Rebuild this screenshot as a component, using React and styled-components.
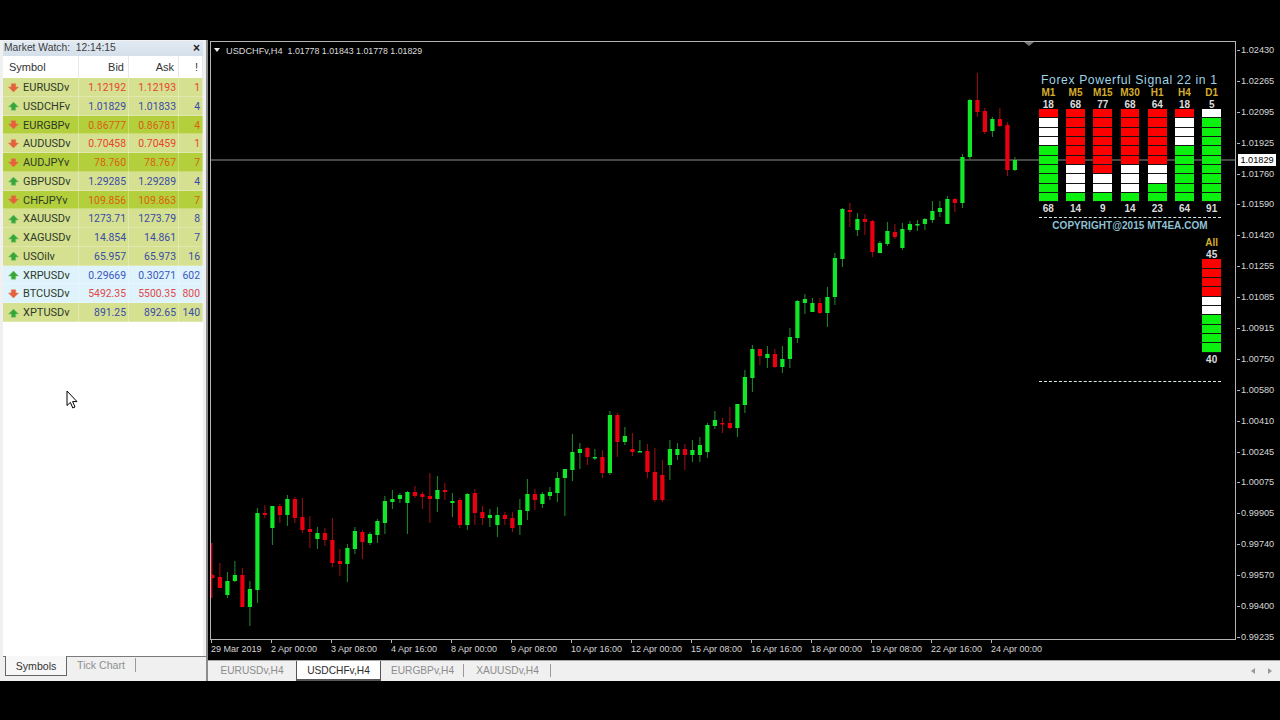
import React from 'react'
import styled, { createGlobalStyle } from 'styled-components'

const GlobalStyle = createGlobalStyle`
    html, body {
        margin: 0;
        padding: 0;
        background: #000;
        font-family: "Liberation Sans", Arial, sans-serif;
    }
`

const Page = styled.div`
    position: relative;
    width: 1280px;
    height: 720px;
    overflow: hidden;
    background: #000;
    padding-top: 40px;
    box-sizing: border-box;
`
const Terminal = styled.div`
    display: flex;
    height: 641px;
    background: #f0f0f0;
`

// left panel
const Sidebar = styled.div`
    width: 208px;
    box-sizing: border-box;
    flex-shrink: 0;
    display: flex;
    flex-direction: column;
    padding: 1px 0 5px 3px;
    border-right: 2px solid #8c8c8c;
    background: #f0f0f0;
`
const WatchPanel = styled.div`
    flex: 1;
    width: 200px;
    display: flex;
    flex-direction: column;
    background: #fff;
`
const TitleBar = styled.div`
    height: 15px;
    box-sizing: border-box;
    display: flex;
    align-items: center;
    justify-content: space-between;
    padding: 0 3px 2px 1px;
    background: linear-gradient(#e2eaf3, #d3dfea);
    color: #3c3c3c;
    font-size: 10.3px;
    white-space: pre;
`
const CloseMark = styled.span`
    font-size: 12px;
    font-weight: 700;
    color: #222;
`
const watchColumns = '76px 50px 50px 24px'
const HeaderRow = styled.div`
    display: grid;
    grid-template-columns: ${watchColumns};
    height: 22px;
    color: #333;
    font-size: 11px;
    line-height: 22px;
`
const HeaderCell = styled.div`
    text-align: ${(p) => (p.$left ? 'left' : 'right')};
    padding: ${(p) => (p.$left ? '0 0 0 6px' : '0 4px 0 0')};
    border-right: 1px solid #e8e8e8;
    border-bottom: 1px solid #e2e2e2;
`
const rowColors = {
    normal: '#d5e090',
    strong: '#b4cf3c',
    cyan: '#def3fb',
}
const Row = styled.div`
    display: grid;
    grid-template-columns: ${watchColumns};
    height: 18.75px;
    line-height: 19px;
    font-family: Roboto, "Liberation Sans", sans-serif;
    font-size: 10.4px;
    background: ${(p) => rowColors[p.$tone]};
    border-bottom: 1px solid rgba(255, 255, 255, 0.28);
    box-sizing: border-box;
`
const SymbolCell = styled.div`
    display: flex;
    align-items: center;
    gap: 4px;
    padding-left: 5px;
    color: #2f3a2a;
    border-right: 1px solid rgba(255, 255, 255, 0.3);
    font-size: 11px;
`
const PriceCell = styled.div`
    text-align: right;
    padding-right: 2px;
    color: ${(p) => p.$color};
    border-right: 1px solid rgba(255, 255, 255, 0.3);
`
const PanelTabs = styled.div`
    height: 20px;
    display: flex;
    align-items: stretch;
    border-top: 1px solid #7a7a7a;
    background: #f0f0f0;
    box-sizing: border-box;
    margin-top: -1px;
    padding-left: 2px;
    font-size: 10.6px;
`
const PanelTab = styled.div`
    display: flex;
    align-items: center;
    justify-content: center;
    width: ${(p) => p.$width}px;
    color: ${(p) => (p.$active ? '#333' : '#8f8f8f')};
    background: ${(p) => (p.$active ? '#f7f7f7' : 'transparent')};
    border-left: ${(p) => (p.$active ? '1px solid #666' : 'none')};
    border-right: 1px solid ${(p) => (p.$active ? '#666' : '#9a9a9a')};
    border-bottom: ${(p) => (p.$active ? '1px solid #666' : 'none')};
    box-sizing: border-box;
    margin-top: ${(p) => (p.$active ? '-1px' : '1px')};
    margin-bottom: ${(p) => (p.$active ? '0' : '4px')};
`

// chart side
const Workspace = styled.div`
    flex: 1;
    background: #000;
    padding-top: 1px;
    display: grid;
    grid-template-columns: 1fr 44px;
    grid-template-rows: 599px 20px 21px;
`
const ChartBox = styled.div`
    position: relative;
    margin-left: 2px;
    border: 1px solid #b4b4b4;
    background: #000;
`
const ChartSvg = styled.svg`
    display: block;
`
const ChartTitle = styled.div`
    position: absolute;
    left: 15px;
    top: 3px;
    color: #dcdcdc;
    font-size: 9.2px;
    line-height: 13px;
    white-space: pre;
`
const TitleQuotes = styled.span`
    font-size: 8.8px;
`
const TitleArrow = styled.div`
    position: absolute;
    left: 3px;
    top: 6px;
    border-left: 3.5px solid transparent;
    border-right: 3.5px solid transparent;
    border-top: 4px solid #eee;
`
const ShiftMark = styled.div`
    position: absolute;
    left: 813px;
    top: 0;
    border-left: 5px solid transparent;
    border-right: 5px solid transparent;
    border-top: 4px solid #777;
`
const PriceAxis = styled.div`
    position: relative;
    grid-column: 2;
    grid-row: 1 / 3;
    display: flex;
    flex-direction: column;
    justify-content: space-between;
    padding: 3px 0 17px 5px;
    color: #d6d6d6;
    font-size: 9.2px;
    line-height: 12px;
`
const PriceLabel = styled.div`
    position: relative;
    &::before {
        content: '';
        position: absolute;
        left: -4px;
        top: 6px;
        width: 3px;
        height: 1px;
        background: #b4b4b4;
    }
`
const LastPrice = styled.div`
    position: absolute;
    left: 2px;
    top: 113px;
    width: 38px;
    height: 12px;
    line-height: 12px;
    background: #fff;
    color: #000;
    font-size: 9.2px;
    text-align: center;
`
const TimeAxis = styled.div`
    grid-column: 1;
    grid-row: 2;
    display: flex;
    padding-left: 3px;
    color: #d6d6d6;
    font-size: 9px;
    line-height: 17px;
`
const TimeLabel = styled.div`
    position: relative;
    width: 60px;
    flex-shrink: 0;
    padding-top: 1px;
    white-space: nowrap;
    &::before {
        content: '';
        position: absolute;
        left: 0;
        top: 0;
        width: 1px;
        height: 3px;
        background: #b4b4b4;
    }
`
const ChartTabs = styled.div`
    grid-column: 1 / 3;
    grid-row: 3;
    display: flex;
    background: #f0f0f0;
    border-top: 1px solid #a8a8a8;
    box-sizing: border-box;
    font-size: 10.2px;
    color: #8c8c8c;
`
const ChartTab = styled.div`
    width: ${(p) => p.$width}px;
    display: flex;
    align-items: center;
    justify-content: center;
    box-sizing: border-box;
    padding-bottom: 2px;
    ${(p) => p.$active && `
        background: #fff;
        color: #2c2c2c;
        border-left: 1px solid #555;
        border-right: 1px solid #555;
        border-bottom: 2px solid #555;
        padding-bottom: 0;
    `}
    ${(p) => p.$divided && `
        position: relative;
        &::after {
            content: '';
            position: absolute;
            right: 0;
            top: 3px;
            bottom: 4px;
            width: 1px;
            background: #9a9a9a;
        }
    `}
`
const TabArrows = styled.div`
    margin-left: auto;
    display: flex;
    align-items: center;
    gap: 13px;
    padding-right: 8px;
`
const TabArrow = styled.div`
    border-top: 3.5px solid transparent;
    border-bottom: 3.5px solid transparent;
    border-right: ${(p) => (p.$left ? '4px solid #999' : 'none')};
    border-left: ${(p) => (p.$left ? 'none' : '4px solid #999')};
`

// signal indicator on the chart
const Signal = styled.div`
    position: absolute;
    left: 828px;
    top: 30px;
    width: 182px;
    display: flex;
    flex-direction: column;
`
const SignalTitle = styled.div`
    height: 15px;
    line-height: 17px;
    padding-left: 2px;
    color: #9fd3e6;
    font-size: 12.2px;
    letter-spacing: 0.6px;
    white-space: nowrap;
`
const SignalGrid = styled.div`
    display: flex;
    justify-content: space-between;
    margin-top: -1px;
`
const SignalColumn = styled.div`
    width: 18.7px;
    display: flex;
    flex-direction: column;
    align-items: center;
`
const FrameLabel = styled.div`
    height: 12px;
    line-height: 14px;
    color: #d6ad2e;
    font-size: 10px;
    font-weight: 700;
    white-space: nowrap;
`
const SignalCount = styled.div`
    height: 11px;
    line-height: 13px;
    color: #ddd;
    font-size: 10px;
    font-weight: 700;
`
const Stack = styled.div`
    width: 100%;
    display: grid;
    grid-auto-rows: 8.33px;
    gap: 1px;
    padding-bottom: 1px;
    background: #141414;
`
const segmentColors = { r: '#ff0000', w: '#ffffff', g: '#0cf010' }
const Segment = styled.div`
    background: ${(p) => segmentColors[p.$kind]};
`
const DashedRule = styled.div`
    border-top: 1px dashed #d8ecec;
    margin-top: ${(p) => p.$top}px;
`
const Copyright = styled.div`
    height: 12px;
    line-height: 15px;
    text-align: center;
    color: #8fc0d4;
    font-size: 10px;
    font-weight: 700;
    letter-spacing: 0.05px;
    white-space: nowrap;
`
const AllRow = styled.div`
    display: flex;
    justify-content: flex-end;
    margin-top: 6px;
`
const Pointer = styled.svg`
    position: absolute;
    left: 66px;
    top: 390px;
`

const up = '#3a4aa8'
const down = '#e8452c'
const hot = '#d9600f'
const WATCH = [
    ['EURUSDv', '1.12192', '1.12193', '1', 'normal', down, false],
    ['USDCHFv', '1.01829', '1.01833', '4', 'normal', up, true],
    ['EURGBPv', '0.86777', '0.86781', '4', 'strong', hot, false],
    ['AUDUSDv', '0.70458', '0.70459', '1', 'normal', down, false],
    ['AUDJPYv', '78.760', '78.767', '7', 'strong', hot, false],
    ['GBPUSDv', '1.29285', '1.29289', '4', 'normal', up, true],
    ['CHFJPYv', '109.856', '109.863', '7', 'strong', hot, false],
    ['XAUUSDv', '1273.71', '1273.79', '8', 'normal', up, true],
    ['XAGUSDv', '14.854', '14.861', '7', 'normal', up, true],
    ['USOilv', '65.957', '65.973', '16', 'normal', up, true],
    ['XRPUSDv', '0.29669', '0.30271', '602', 'cyan', '#3c56c0', true],
    ['BTCUSDv', '5492.35', '5500.35', '800', 'cyan', '#e24848', false],
    ['XPTUSDv', '891.25', '892.65', '140', 'normal', up, true],
]

const PRICES = ['1.02430', '1.02265', '1.02095', '1.01925', '1.01760', '1.01590', '1.01420', '1.01255', '1.01085', '1.00915',
    '1.00750', '1.00580', '1.00410', '1.00245', '1.00075', '0.99905', '0.99740', '0.99570', '0.99400', '0.99235']

const TIMES = ['29 Mar 2019', '2 Apr 00:00', '3 Apr 08:00', '4 Apr 16:00', '8 Apr 00:00', '9 Apr 08:00', '10 Apr 16:00', '12 Apr 00:00',
    '15 Apr 08:00', '16 Apr 16:00', '18 Apr 00:00', '19 Apr 08:00', '22 Apr 16:00', '24 Apr 00:00']

// colour, wick top, body top, body bottom, wick bottom (page y)
const CANDLES = [
    ['r', 574, 575, 578, 579], ['r', 563, 577, 588, 588], ['g', 572, 581, 595, 598], ['g', 561, 575, 581, 582],
    ['r', 568, 575, 607, 607], ['g', 581, 589, 607, 626], ['g', 508, 513, 590, 603], ['r', 505, 513, 515, 518],
    ['g', 506, 506, 528, 545], ['r', 504, 506, 515, 523], ['g', 495, 499, 515, 526], ['r', 497, 499, 518, 523],
    ['r', 498, 517, 530, 533], ['r', 516, 529, 532, 548], ['g', 527, 533, 539, 549], ['r', 528, 533, 540, 546],
    ['r', 518, 540, 563, 567], ['r', 549, 561, 564, 576], ['g', 544, 548, 564, 582], ['g', 527, 531, 549, 554],
    ['r', 530, 532, 542, 559], ['g', 532, 534, 543, 545], ['g', 519, 521, 535, 543], ['g', 496, 501, 523, 534],
    ['g', 490, 499, 502, 509], ['g', 493, 495, 499, 503], ['g', 491, 492, 503, 534], ['r', 486, 492, 496, 498],
    ['r', 492, 494, 497, 509], ['r', 473, 496, 499, 523], ['g', 476, 490, 499, 512], ['r', 483, 490, 492, 500],
    ['g', 493, 501, 503, 517], ['r', 498, 500, 525, 528], ['g', 493, 494, 525, 530], ['r', 489, 493, 513, 525],
    ['r', 506, 512, 518, 525], ['g', 509, 515, 518, 527], ['g', 507, 515, 525, 537], ['r', 512, 515, 519, 525],
    ['r', 512, 518, 528, 532], ['g', 499, 510, 525, 535], ['g', 479, 494, 511, 520], ['r', 489, 494, 500, 510],
    ['g', 492, 494, 504, 508], ['g', 487, 492, 496, 500], ['g', 472, 478, 493, 502], ['g', 469, 469, 478, 516],
    ['g', 434, 452, 470, 481], ['g', 443, 449, 453, 469], ['r', 447, 448, 457, 465], ['g', 449, 457, 458, 460],
    ['r', 450, 457, 473, 478], ['g', 411, 415, 473, 475], ['r', 413, 415, 442, 457], ['g', 427, 436, 442, 445],
    ['r', 433, 449, 452, 456], ['g', 440, 451, 452, 452], ['r', 444, 451, 472, 478], ['r', 448, 472, 500, 502],
    ['r', 460, 475, 500, 502], ['g', 440, 449, 465, 480], ['g', 443, 449, 455, 460], ['r', 444, 449, 455, 470],
    ['g', 440, 450, 455, 462], ['g', 437, 445, 455, 462], ['g', 423, 425, 452, 458], ['g', 411, 420, 426, 429],
    ['r', 418, 423, 424, 433], ['r', 407, 423, 428, 429], ['g', 404, 404, 428, 437], ['g', 370, 377, 405, 413],
    ['g', 345, 349, 378, 392], ['r', 349, 349, 356, 365], ['g', 346, 354, 358, 368], ['r', 349, 354, 367, 368],
    ['g', 346, 359, 367, 373], ['g', 328, 337, 359, 368], ['g', 300, 301, 338, 343], ['g', 294, 299, 303, 314],
    ['g', 298, 303, 312, 312], ['r', 298, 303, 313, 314], ['g', 287, 297, 313, 327], ['g', 253, 258, 297, 305],
    ['g', 208, 209, 259, 267], ['r', 203, 210, 212, 227], ['g', 213, 219, 230, 236], ['r', 214, 219, 222, 235],
    ['r', 220, 221, 252, 257], ['g', 241, 243, 253, 253], ['g', 222, 231, 244, 246], ['r', 224, 232, 237, 239],
    ['g', 223, 229, 248, 250], ['g', 221, 224, 230, 232], ['g', 220, 224, 225, 231], ['g', 218, 219, 224, 230],
    ['g', 201, 211, 220, 223], ['g', 201, 208, 212, 217], ['g', 196, 199, 224, 224], ['r', 198, 199, 203, 212],
    ['g', 154, 157, 203, 208], ['g', 99, 100, 157, 160], ['r', 73, 100, 112, 117], ['r', 108, 111, 132, 134],
    ['g', 117, 119, 131, 137], ['r', 108, 119, 126, 127], ['r', 122, 125, 170, 176], ['g', 157, 160, 170, 171],
]

// label, top count, red, white, green, bottom count
const SIGNALS = [
    ['M1', 18, 1, 3, 6, 68],
    ['M5', 68, 6, 3, 1, 14],
    ['M15', 77, 7, 2, 1, 9],
    ['M30', 68, 6, 3, 1, 14],
    ['H1', 64, 6, 2, 2, 23],
    ['H4', 18, 1, 3, 6, 64],
    ['D1', 5, 0, 1, 9, 91],
]

const TickArrow = ({ rising }) => (
    <svg width="11" height="10" viewBox="0 0 11 10">
        {rising
            ? <path d="M5.5 1 L10.5 6 H7.7 V9.2 H3.3 V6 H.5 Z" fill="#37a63a" stroke="#7cc46a" strokeWidth=".5" />
            : <path d="M5.5 9 L10.5 4 H7.7 V.8 H3.3 V4 H.5 Z" fill="#e8603a" stroke="#d87a50" strokeWidth=".5" />}
    </svg>
)

const SegmentStack = ({ red, white, green }) => {
    const kinds = [...Array(red).fill('r'), ...Array(white).fill('w'), ...Array(green).fill('g')]
    return (
        <Stack>
            {kinds.map((kind, i) => <Segment key={i} $kind={kind} />)}
        </Stack>
    )
}

const Candles = () => (
    <ChartSvg width="1024" height="597" viewBox="211 42 1024 597">
        <rect x="211" y="543" width="1.4" height="55" fill="#c00010" />
        <line x1="211" y1="160" x2="1235" y2="160" stroke="#8e8e8e" />
        {CANDLES.map(([kind, wickTop, top, bottom, wickBottom], i) => {
            const x = 212.4 + i * 7.5
            const fill = kind === 'g' ? '#10e828' : '#ea0010'
            const wick = kind === 'g' ? '#238f2c' : '#a01018'
            return (
                <g key={i}>
                    <line x1={x} x2={x} y1={wickTop} y2={wickBottom} stroke={wick} strokeWidth="1" />
                    <rect x={x - 2.1} y={top} width="4.2" height={Math.max(bottom - top, 1.5)} fill={fill} />
                </g>
            )
        })}
    </ChartSvg>
)

const App = () => {
    return (
        <Page>
            <GlobalStyle />
            <Terminal>
                <Sidebar>
                    <WatchPanel>
                        <TitleBar>
                            <span>Market Watch:  12:14:15</span>
                            <CloseMark>×</CloseMark>
                        </TitleBar>
                        <HeaderRow>
                            <HeaderCell $left>Symbol</HeaderCell>
                            <HeaderCell>Bid</HeaderCell>
                            <HeaderCell>Ask</HeaderCell>
                            <HeaderCell>!</HeaderCell>
                        </HeaderRow>
                        {WATCH.map(([symbol, bid, ask, spread, tone, color, rising]) => (
                            <Row key={symbol} $tone={tone}>
                                <SymbolCell><TickArrow rising={rising} />{symbol}</SymbolCell>
                                <PriceCell $color={color}>{bid}</PriceCell>
                                <PriceCell $color={color}>{ask}</PriceCell>
                                <PriceCell $color={color}>{spread}</PriceCell>
                            </Row>
                        ))}
                    </WatchPanel>
                    <PanelTabs>
                        <PanelTab $active $width={62}>Symbols</PanelTab>
                        <PanelTab $width={69}>Tick Chart</PanelTab>
                    </PanelTabs>
                </Sidebar>
                <Workspace>
                    <ChartBox>
                        <Candles />
                        <TitleArrow />
                        <ChartTitle>USDCHFv,H4  <TitleQuotes>1.01778 1.01843 1.01778 1.01829</TitleQuotes></ChartTitle>
                        <ShiftMark />
                        <Signal>
                            <SignalTitle>Forex Powerful Signal 22 in 1</SignalTitle>
                            <SignalGrid>
                                {SIGNALS.map(([frame, top, red, white, green, bottom]) => (
                                    <SignalColumn key={frame}>
                                        <FrameLabel>{frame}</FrameLabel>
                                        <SignalCount>{top}</SignalCount>
                                        <SegmentStack red={red} white={white} green={green} />
                                        <SignalCount>{bottom}</SignalCount>
                                    </SignalColumn>
                                ))}
                            </SignalGrid>
                            <DashedRule $top={4} />
                            <Copyright>COPYRIGHT@2015 MT4EA.COM</Copyright>
                            <AllRow>
                                <SignalColumn>
                                    <FrameLabel>All</FrameLabel>
                                    <SignalCount>45</SignalCount>
                                    <SegmentStack red={4} white={2} green={4} />
                                    <SignalCount>40</SignalCount>
                                </SignalColumn>
                            </AllRow>
                            <DashedRule $top={17} />
                        </Signal>
                    </ChartBox>
                    <PriceAxis>
                        {PRICES.map((price) => <PriceLabel key={price}>{price}</PriceLabel>)}
                        <LastPrice>1.01829</LastPrice>
                    </PriceAxis>
                    <TimeAxis>
                        {TIMES.map((time) => <TimeLabel key={time}>{time}</TimeLabel>)}
                    </TimeAxis>
                    <ChartTabs>
                        <ChartTab $width={88}>EURUSDv,H4</ChartTab>
                        <ChartTab $active $width={85}>USDCHFv,H4</ChartTab>
                        <ChartTab $divided $width={83}>EURGBPv,H4</ChartTab>
                        <ChartTab $divided $width={87}>XAUUSDv,H4</ChartTab>
                        <TabArrows>
                            <TabArrow $left />
                            <TabArrow />
                        </TabArrows>
                    </ChartTabs>
                </Workspace>
            </Terminal>
            <Pointer width="12" height="20" viewBox="0 0 12 20">
                <path d="M1 1 V15.5 L4.4 12.4 L6.8 18 L9 17 L6.6 11.6 H11 Z" fill="#fff" stroke="#000" strokeWidth="1" />
            </Pointer>
        </Page>
    )
}

export default App
